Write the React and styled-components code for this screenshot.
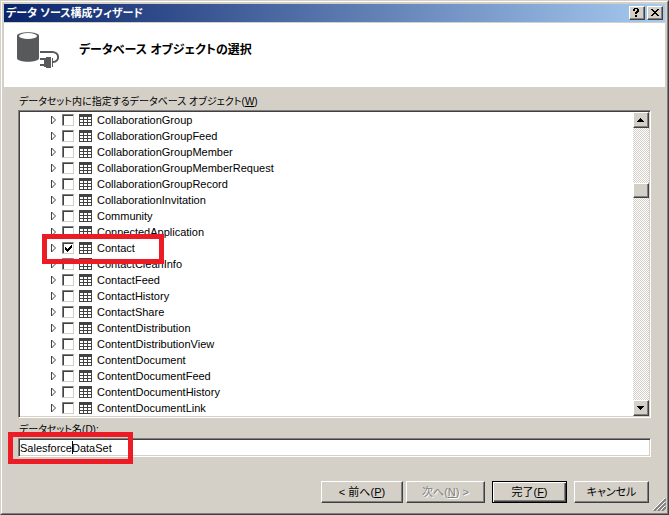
import React from "react";
import styled, { createGlobalStyle, css } from "styled-components";

const GlobalStyle = createGlobalStyle`
  * {
    box-sizing: border-box;
  }

  body {
    margin: 0;
    background: #d4d0c8;
    color: #000;
    font-family: "Liberation Sans", "Noto Sans CJK JP", sans-serif;
    font-size: 11px;
    line-height: 16px;
    font-feature-settings: "palt", "kern";
  }

  button,
  input {
    font: inherit;
    font-feature-settings: inherit;
    color: inherit;
  }
`;

const raised = css`
  border: 1px solid;
  border-color: #fff #404040 #404040 #fff;
  box-shadow: inset -1px -1px #808080;
  background: #d4d0c8;
`;

const sunken = css`
  border: 1px solid;
  border-color: #808080 #fff #fff #808080;
  box-shadow: inset 1px 1px #404040, inset -1px -1px #d4d0c8;
  background: #fff;
`;

const Frame = styled.div`
  border: 1px solid;
  border-color: #d4d0c8 #404040 #404040 #d4d0c8;
`;

const Window = styled.main`
  position: relative;
  border: 1px solid;
  border-color: #fff #808080 #808080 #fff;
  padding: 2px;
  background: #d4d0c8;
`;

const TitleBar = styled.header`
  display: flex;
  align-items: center;
  gap: 2px;
  height: 18px;
  padding: 0 2px;
  background: linear-gradient(to right, #0a246a, #a6caf0);
`;

const Title = styled.div`
  flex: 1;
  color: #fff;
  font-weight: bold;
`;

const TitleButton = styled.button`
  ${raised}
  display: flex;
  align-items: center;
  justify-content: center;
  width: 16px;
  height: 14px;
  padding: 0 1px 1px 0;
`;

const Banner = styled.section`
  display: flex;
  gap: 18px;
  height: 64px;
  margin-top: 1px;
  padding: 8px 12px;
  background: #fff;
`;

const Heading = styled.h1`
  margin: 0;
  padding-top: 8px;
  font-size: 12px;
  line-height: 22px;
`;

const Body = styled.form`
  display: flex;
  flex-direction: column;
  padding: 7px 14px 8px;
`;

const Label = styled.label`
  display: block;
  height: 16px;
  padding-left: 1px;
  font-size: 10px;
`;

const ObjectBox = styled.div`
  ${sunken}
  display: flex;
  padding: 1px;
  margin-bottom: 4px;
`;

const Tree = styled.ul`
  flex: 1;
  margin: 0;
  padding: 0 0 0 30px;
  list-style: none;
`;

const TreeRow = styled.li`
  position: relative;
  display: flex;
  align-items: center;
  height: 16px;
`;

const Expander = styled.button`
  display: flex;
  width: 12px;
  padding: 0;
  border: 0;
  background: none;
`;

const RowLabel = styled.label`
  display: flex;
  align-items: center;
  gap: 5px;
`;

const Check = styled.input`
  appearance: none;
  width: 12px;
  height: 12px;
  margin: 0;
  border: 1px solid;
  border-color: #808080 #d4d0c8 #d4d0c8 #808080;
  box-shadow: inset 1px 1px #404040;
  background: #fff;

  &:checked {
    background: #fff
      url("data:image/svg+xml,%3Csvg xmlns='http://www.w3.org/2000/svg' viewBox='0 0 10 10' shape-rendering='crispEdges'%3E%3Cpath d='M2 4h1v1h1v1h1V5h1V4h1V3h1V2h1v3H8v1H7v1H6v1H5v1H4V8H3V7H2z'/%3E%3C/svg%3E");
  }
`;

const ScrollBar = styled.div`
  display: flex;
  flex-direction: column;
  width: 16px;
  background: repeating-conic-gradient(#d4d0c8 0 25%, #fff 0 50%) 0 0 / 2px 2px;
`;

const ScrollButton = styled.button`
  ${raised}
  display: flex;
  align-items: center;
  justify-content: center;
  height: 16px;
  padding: 0 1px 1px 0;
`;

const Track = styled.div`
  flex: 1;
  padding-top: 55px;
`;

const Thumb = styled.div`
  ${raised}
  height: 15px;
`;

const NameField = styled.div`
  position: relative;
`;

const NameInput = styled.input`
  ${sunken}
  display: block;
  width: 100%;
  height: 19px;
  padding: 0 1px;
  outline: 0;
`;

const Caret = styled.span`
  position: absolute;
  top: 3px;
  left: 54px;
  width: 1px;
  height: 13px;
  background: #000;
`;

const Highlight = styled.div`
  position: absolute;
  top: -6px;
  left: ${(p) => p.$left}px;
  width: ${(p) => p.$width}px;
  height: ${(p) => p.$height}px;
  border: 5px solid #ed1c24;
  pointer-events: none;
  z-index: 1;
`;

const Actions = styled.footer`
  display: flex;
  justify-content: flex-end;
  gap: 7px;
  margin-top: 24px;
  padding-right: 2px;
`;

const Pair = styled.div`
  display: flex;
  gap: 3px;
`;

const Button = styled.button`
  ${raised}
  width: ${(p) => p.$width || 75}px;
  height: 22px;
  padding: 0;

  &:disabled {
    color: #808080;
    text-shadow: 1px 1px #fff;
  }

  ${(p) =>
    p.$default &&
    css`
      border-color: #000;
      box-shadow: inset 1px 1px #fff, inset -1px -1px #404040,
        inset -2px -2px #808080;
    `}
`;

const Grip = styled.svg`
  position: absolute;
  right: 1px;
  bottom: 2px;
`;

const objects = [
  "CollaborationGroup",
  "CollaborationGroupFeed",
  "CollaborationGroupMember",
  "CollaborationGroupMemberRequest",
  "CollaborationGroupRecord",
  "CollaborationInvitation",
  "Community",
  "ConnectedApplication",
  "Contact",
  "ContactCleanInfo",
  "ContactFeed",
  "ContactHistory",
  "ContactShare",
  "ContentDistribution",
  "ContentDistributionView",
  "ContentDocument",
  "ContentDocumentFeed",
  "ContentDocumentHistory",
  "ContentDocumentLink",
];

const DatabaseIcon = () => (
  <svg width="45" height="38" viewBox="0 0 45 38" aria-hidden="true">
    <path
      d="M1 5C1 0 23 0 23 5V27C23 32 1 32 1 27Z"
      fill="#58595b"
    />
    <ellipse cx="12" cy="5" rx="9" ry="3" fill="#fff" />
    <path
      d="M24 21H36C44 21 44 31 37 31"
      fill="none"
      stroke="#58595b"
      strokeWidth="2"
    />
    <path
      d="M24 27h4v2h-4zM24 33h4v2h-4zM28 27h2v-1h5v11h-5v-1h-2zM36 27h1v9h-1z"
      fill="#58595b"
    />
  </svg>
);

const TableIcon = () => (
  <svg
    width="13"
    height="12"
    viewBox="0 0 13 12"
    shapeRendering="crispEdges"
    aria-hidden="true"
  >
    <path fill="#424242" d="M0 0h13v12H0z" />
    <path
      fill="#fff"
      d="M1 3h3v2H1zM5 3h3v2H5zM9 3h3v2H9zM1 6h3v2H1zM5 6h3v2H5zM9 6h3v2H9zM1 9h3v2H1zM5 9h3v2H5zM9 9h3v2H9z"
    />
  </svg>
);

const Arrow = ({ down }) => (
  <svg width="7" height="4" shapeRendering="crispEdges" aria-hidden="true">
    <path
      d={
        down
          ? "M0 0h7v1H6v1H5v1H4v1H3V3H2V2H1V1H0z"
          : "M3 0h1v1h1v1h1v1h1v1H0V3h1V2h1V1h1z"
      }
    />
  </svg>
);

const ObjectRow = ({ name }) => (
  <TreeRow>
    <Expander type="button" aria-label={`${name} を展開`}>
      <svg width="7" height="10" viewBox="0 0 7 10" aria-hidden="true">
        <path d="M1.5 1V9L5.5 5Z" fill="#fff" stroke="#404040" />
      </svg>
    </Expander>
    <RowLabel>
      <Check type="checkbox" defaultChecked={name === "Contact"} />
      <TableIcon />
      {name}
    </RowLabel>
    {name === "Contact" && <Highlight $left={-8} $width={122} $height={30} />}
  </TreeRow>
);

const App = () => {
  return (
    <Frame>
      <GlobalStyle />
      <Window>
        <TitleBar>
          <Title>データ ソース構成ウィザード</Title>
          <TitleButton type="button" aria-label="ヘルプ">
            <svg width="7" height="9" shapeRendering="crispEdges">
              <path d="M1 0h4v1h1v3H5v1H4v1H2V4h1V3h1V1H2v2H0V1h1zM2 7h2v2H2z" />
            </svg>
          </TitleButton>
          <TitleButton type="button" aria-label="閉じる">
            <svg width="8" height="7" shapeRendering="crispEdges">
              <path d="M0 0h2v1h1v1h2V1h1V0h2v1H7v1H6v1H5v1h1v1h1v1h1v1H6V6H5V5H3v1H2v1H0V6h1V5h1V4h1V3H2V2H1V1H0z" />
            </svg>
          </TitleButton>
        </TitleBar>
        <Banner>
          <DatabaseIcon />
          <Heading>データベース オブジェクトの選択</Heading>
        </Banner>
        <Body onSubmit={(e) => e.preventDefault()}>
          <Label as="div" id="objects-label">
            データセット内に指定するデータベース オブジェクト(<u>W</u>)
          </Label>
          <ObjectBox>
            <Tree aria-labelledby="objects-label">
              {objects.map((name) => (
                <ObjectRow key={name} name={name} />
              ))}
            </Tree>
            <ScrollBar>
              <ScrollButton type="button" aria-label="上へスクロール">
                <Arrow />
              </ScrollButton>
              <Track>
                <Thumb />
              </Track>
              <ScrollButton type="button" aria-label="下へスクロール">
                <Arrow down />
              </ScrollButton>
            </ScrollBar>
          </ObjectBox>
          <Label htmlFor="dataset-name">
            データセット名(<u>D</u>):
          </Label>
          <NameField>
            <NameInput id="dataset-name" defaultValue="SalesforceDataSet" />
            <Caret />
            <Highlight $left={-10} $width={125} $height={32} />
          </NameField>
          <Actions>
            <Pair>
              <Button type="button" $width={82}>
                &lt; 前へ(<u>P</u>)
              </Button>
              <Button type="button" $width={79} disabled>
                次へ(<u>N</u>) &gt;
              </Button>
            </Pair>
            <Button type="submit" $default>
              完了(<u>F</u>)
            </Button>
            <Button type="button">キャンセル</Button>
          </Actions>
        </Body>
        <Grip width="13" height="13" aria-hidden="true">
          <path d="M1 13L13 1M5 13L13 5M9 13L13 9" stroke="#808080" strokeWidth="2" />
          <path d="M0 12L12 0M4 12L12 4M8 12L12 8" stroke="#fff" />
        </Grip>
      </Window>
    </Frame>
  );
};

export default App;
